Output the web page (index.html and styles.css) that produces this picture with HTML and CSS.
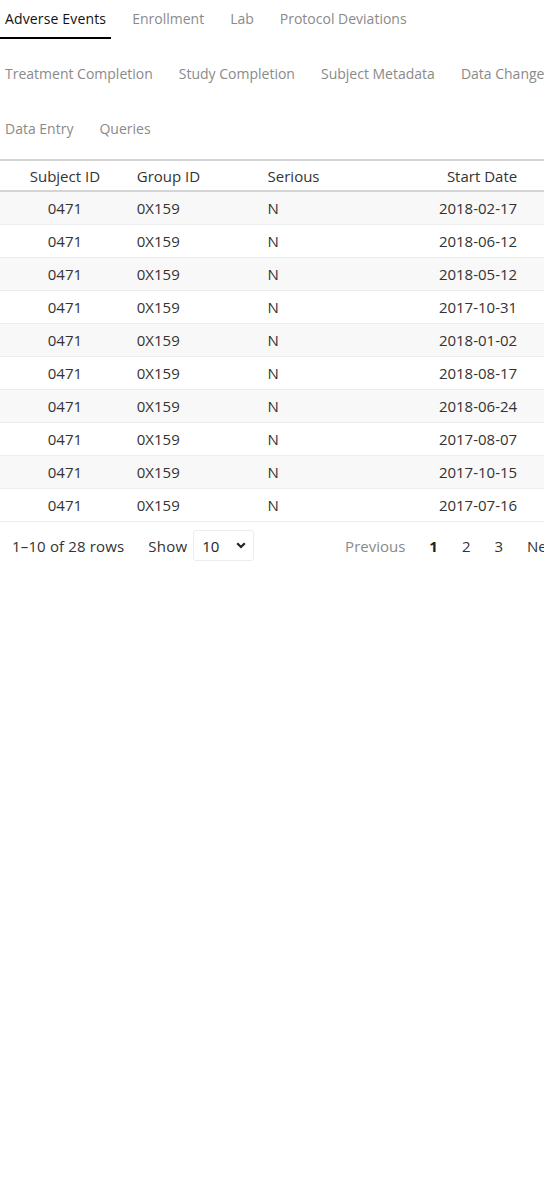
FILE: index.html
```html
<!DOCTYPE html>
<html>
<head>
<meta charset="utf-8">
<link rel="stylesheet" href="styles.css">
</head>
<body>
<div class="viewport">
  <div class="page">
    <nav class="tabs">
      <span class="tab active">Adverse Events</span>
      <span class="tab">Enrollment</span>
      <span class="tab">Lab</span>
      <span class="tab">Protocol Deviations</span>
      <span class="tab">Treatment Completion</span>
      <span class="tab">Study Completion</span>
      <span class="tab">Subject Metadata</span>
      <span class="tab">Data Changes</span>
      <span class="tab">Data Entry</span>
      <span class="tab">Queries</span>
    </nav>
    <table class="grid">
      <thead>
        <tr>
          <th class="c-subj">Subject ID</th>
          <th class="c-group">Group ID</th>
          <th class="c-ser">Serious</th>
          <th class="c-date">Start Date</th>
          <th class="c-end">End Date</th>
        </tr>
      </thead>
      <tbody>
        <tr><td class="c-subj">0471</td><td class="c-group">0X159</td><td class="c-ser">N</td><td class="c-date">2018-02-17</td><td class="c-end">2018-02-20</td></tr>
        <tr><td class="c-subj">0471</td><td class="c-group">0X159</td><td class="c-ser">N</td><td class="c-date">2018-06-12</td><td class="c-end">2018-06-15</td></tr>
        <tr><td class="c-subj">0471</td><td class="c-group">0X159</td><td class="c-ser">N</td><td class="c-date">2018-05-12</td><td class="c-end">2018-05-14</td></tr>
        <tr><td class="c-subj">0471</td><td class="c-group">0X159</td><td class="c-ser">N</td><td class="c-date">2017-10-31</td><td class="c-end">2017-11-02</td></tr>
        <tr><td class="c-subj">0471</td><td class="c-group">0X159</td><td class="c-ser">N</td><td class="c-date">2018-01-02</td><td class="c-end">2018-01-05</td></tr>
        <tr><td class="c-subj">0471</td><td class="c-group">0X159</td><td class="c-ser">N</td><td class="c-date">2018-08-17</td><td class="c-end">2018-08-19</td></tr>
        <tr><td class="c-subj">0471</td><td class="c-group">0X159</td><td class="c-ser">N</td><td class="c-date">2018-06-24</td><td class="c-end">2018-06-26</td></tr>
        <tr><td class="c-subj">0471</td><td class="c-group">0X159</td><td class="c-ser">N</td><td class="c-date">2017-08-07</td><td class="c-end">2017-08-09</td></tr>
        <tr><td class="c-subj">0471</td><td class="c-group">0X159</td><td class="c-ser">N</td><td class="c-date">2017-10-15</td><td class="c-end">2017-10-18</td></tr>
        <tr><td class="c-subj">0471</td><td class="c-group">0X159</td><td class="c-ser">N</td><td class="c-date">2017-07-16</td><td class="c-end">2017-07-19</td></tr>
      </tbody>
    </table>
    <div class="footer">
      <div class="info">
        <span class="rows">1–10 of 28 rows</span>
        <span class="show">Show</span>
        <span class="select">
          <span>10</span>
          <svg class="chev" width="10" height="7" viewBox="0 0 10 7"><path d="M1.2 1.2 L5 5 L8.8 1.2" fill="none" stroke="#222" stroke-width="2.2"/></svg>
        </span>
      </div>
      <div class="pager">
        <span class="pg disabled">Previous</span>
        <span class="pg current">1</span>
        <span class="pg">2</span>
        <span class="pg">3</span>
        <span class="pg">Next</span>
      </div>
    </div>
  </div>
</div>
</body>
</html>
```
FILE: styles.css
```css
html, body {
  margin: 0;
  padding: 0;
  background: #fff;
}
.viewport {
  width: 544px;
  overflow: hidden;
}
.page {
  width: 572px;
  font-family: "Open Sans", "Liberation Sans", sans-serif;
  color: #333;
}
.tabs {
  display: flex;
  flex-wrap: wrap;
  column-gap: 16px;
  row-gap: 16px;
}
.tab {
  font-size: 14px;
  line-height: 20px;
  padding: 9px 5px 8px;
  border-bottom: 2px solid transparent;
  color: #8a8a8a;
  white-space: nowrap;
}
.tab.active {
  color: #111;
  border-bottom-color: #000;
  letter-spacing: 0.15px;
}
.grid {
  margin-top: 10px;
  border-collapse: collapse;
  font-size: 15px;
  table-layout: fixed;
  width: 654px;
}
.grid th {
  font-weight: normal;
  line-height: 20px;
  padding: 5px 7px 4px;
  border-top: 2px solid #d4d4d4;
  border-bottom: 2px solid #d4d4d4;
  color: #333;
}
.grid td {
  line-height: 20px;
  padding: 6px 7px;
  border-bottom: 1px solid #ededed;
  color: #333;
}
.grid tbody tr:nth-child(odd) {
  background: #f8f8f8;
}
.c-subj { width: 115px; text-align: center; }
.c-group { width: 116px; text-align: left; }
.c-ser { width: 117px; text-align: left; }
.c-date { width: 117px; text-align: right; }
.c-end { width: 115px; text-align: right; }
.footer {
  display: flex;
  justify-content: space-between;
  align-items: center;
  padding-top: 8px;
  font-size: 15px;
}
.info {
  display: flex;
  align-items: center;
  padding-left: 12px;
}
.rows {
  letter-spacing: 0.15px;
}
.show {
  margin-left: 24px;
  letter-spacing: 0.2px;
}
.select {
  display: flex;
  align-items: center;
  justify-content: space-between;
  margin-left: 6px;
  width: 44px;
  height: 29px;
  padding: 0 7px 0 8px;
  border: 1px solid #ececec;
  border-radius: 3px;
  color: #222;
}
.chev { display: block; }
.pager {
  display: flex;
}
.pg {
  padding: 0 12px;
  line-height: 20px;
  color: #333;
}
.pg.disabled { color: #8a8a8a; }
.pg.current { font-weight: bold; color: #222; }
```
